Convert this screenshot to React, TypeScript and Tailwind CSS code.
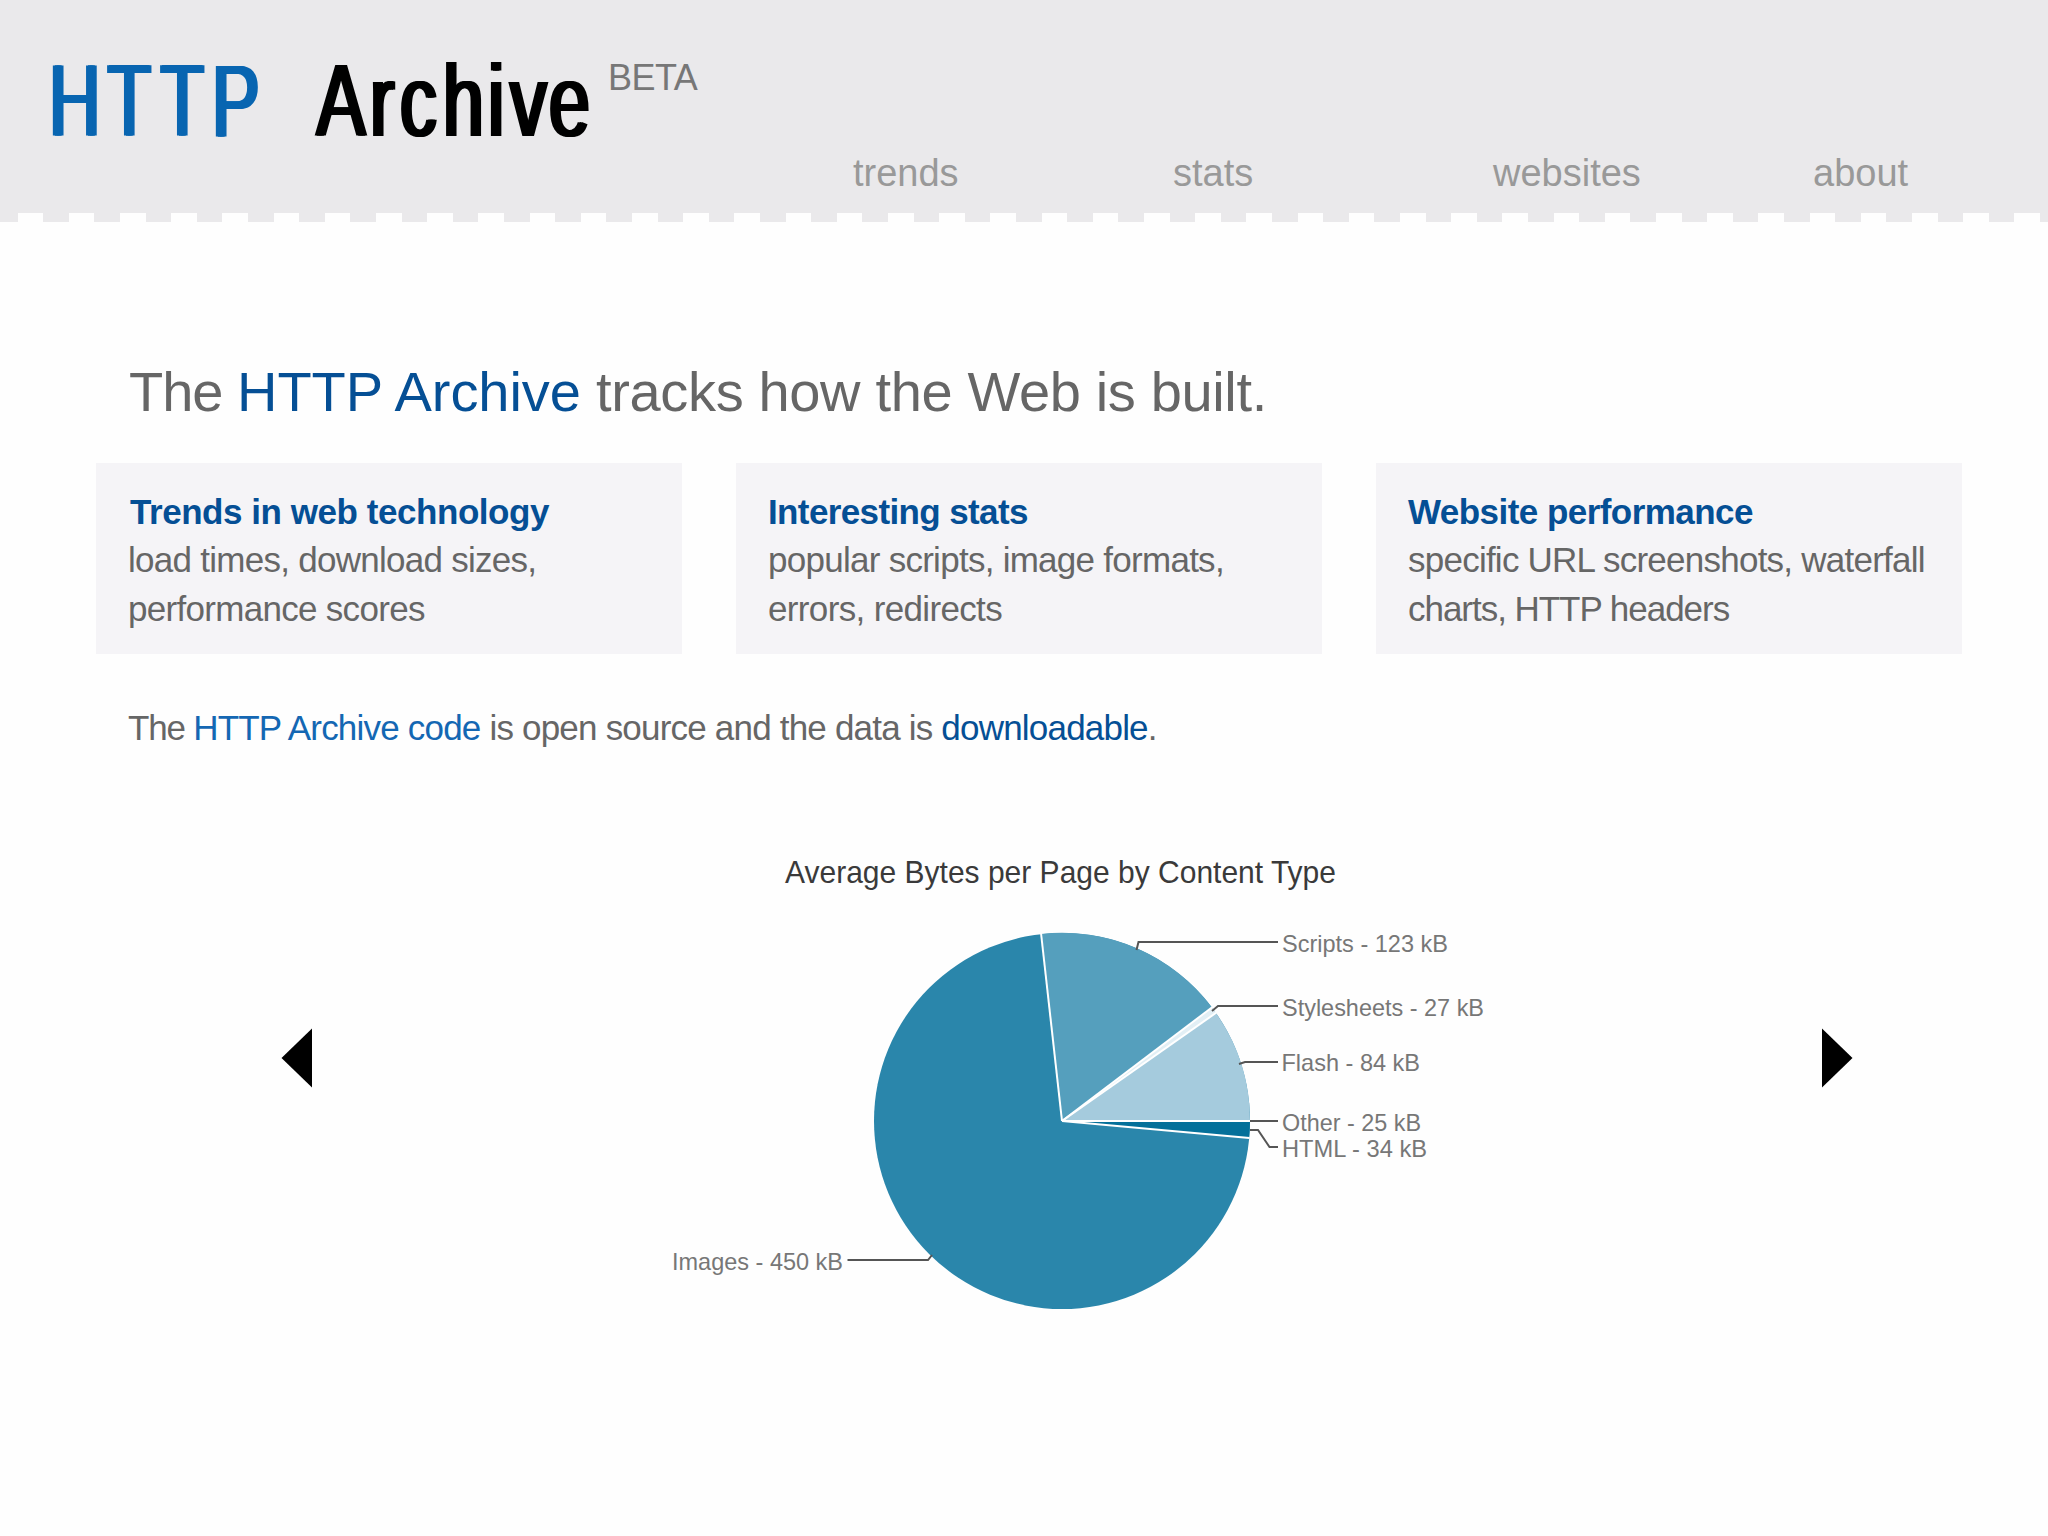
const navLinks = ["trends", "stats", "websites", "about"];

const cards = [
  {
    title: "Trends in web technology",
    titleClass: "pl-[2px] tracking-[-0.45px]",
    lines: [
      { text: "load times, download sizes,", className: "tracking-[-0.73px]" },
      { text: "performance scores", className: "tracking-[-0.7px]" },
    ],
  },
  {
    title: "Interesting stats",
    titleClass: "tracking-[-0.62px]",
    lines: [
      { text: "popular scripts, image formats,", className: "tracking-[-0.73px]" },
      { text: "errors, redirects", className: "tracking-[-0.65px]" },
    ],
  },
  {
    title: "Website performance",
    titleClass: "tracking-[-0.55px]",
    lines: [
      { text: "specific URL screenshots, waterfall", className: "tracking-[-0.76px]" },
      { text: "charts, HTTP headers", className: "tracking-[-1.03px]" },
    ],
  },
];

const labels = [
  { text: "Scripts - 123 kB", x: 642, y: 111.5, width: 166, line: "496.5,110 498.5,102 638,102" },
  { text: "Stylesheets - 27 kB", x: 642, y: 175.5, width: 202, line: "572,171 578,166 638,166" },
  { text: "Flash - 84 kB", x: 641.5, y: 231, width: 138.5, line: "599,224 605,222 638,222" },
  { text: "Other - 25 kB", x: 642, y: 291, width: 139, line: "610,281 638,281" },
  { text: "HTML - 34 kB", x: 642, y: 316.5, width: 145, line: "610,290 618,290 629.5,307 638,307" },
  { text: "Images - 450 kB", x: 32, y: 429.5, width: 171, line: "207.5,420 288,420 292,415" },
];

const Logo = () => {
  return (
    <svg className="block" width="560" height="130" viewBox="0 0 560 130" fontFamily="Liberation Sans, Arial, sans-serif" fontSize="102">
      {/* the shadows thicken the vertical strokes only */}
      <g className="[filter:drop-shadow(2px_0_0_#0865b1)_drop-shadow(2px_0_0_#0865b1)]">
        <text transform="scale(0.7 1)" x="-1.6 82 157.7 231.6" y="106" fill="#0865b1">
          HTTP
        </text>
      </g>
      <g className="[filter:drop-shadow(2px_0_0_#000)_drop-shadow(2px_0_0_#000)]">
        <text transform="scale(0.72 1)" x="370 444.4 486 545.8 608.3 638.9 693" y="106" fill="#000">
          Archive
        </text>
      </g>
    </svg>
  );
};

const Header = () => {
  return (
    <header>
      <div className="h-[213px] bg-[#eae9eb]">
        <div className="flex h-[150px] items-start pt-[30px] pl-12">
          <Logo />
          <span className="mt-[22px] text-[36px] leading-[52px] tracking-[-0.5px] text-[#777]">BETA</span>
        </div>
        <nav className="ml-[853px] grid grid-cols-[320px_320px_320px_auto] pt-px text-[38px] leading-[44px] text-[#999]">
          {navLinks.map((link) => (
            <a key={link}>{link}</a>
          ))}
        </nav>
      </div>
      {/* stitched edge */}
      <div className="h-[9px] bg-[repeating-linear-gradient(90deg,#eae9eb_0_25.6px,#fefefe_25.6px_51.2px)] bg-[position:-8px_0] bg-[length:2099.2px_9px]"></div>
    </header>
  );
};

const PieChart = () => {
  return (
    <svg className="block" width="880" height="500" viewBox="0 0 880 500" fontFamily="Liberation Sans, Arial, sans-serif">
      <text x="145" y="43" fontSize="30.5" fill="#3a3a3a" textLength="551" lengthAdjust="spacingAndGlyphs">
        Average Bytes per Page by Content Type
      </text>
      <circle cx="422" cy="281" r="188" fill="#2a86ab" />
      <path d="M422 281 L401 94 A188 188 0 0 1 572 167.500Z" fill="#559fbd" />
      <path d="M422 281 L572 167.500 A188 188 0 0 1 576 173Z" fill="#e2eff5" />
      <path d="M422 281 L576 173 A188 188 0 0 1 610 281Z" fill="#a5cbdd" />
      <path d="M422 281 L610 281 A188 188 0 0 1 609 298Z" fill="#04709a" />
      <g stroke="#fff" strokeWidth="2">
        <path d="M422 281 L401 93" />
        <path d="M422 281 L572.500 167" />
        <path d="M422 281 L576.500 172.500" />
        <path d="M422 281 H610" />
        <path d="M422 281 L609.500 298" />
      </g>
      {labels.map((label) => (
        <g key={label.text}>
          <polyline points={label.line} fill="none" stroke="#555" strokeWidth="2" />
          <text x={label.x} y={label.y} fontSize="24" fill="#777" textLength={label.width} lengthAdjust="spacingAndGlyphs">
            {label.text}
          </text>
        </g>
      ))}
    </svg>
  );
};

const App = () => {
  return (
    <div className="h-[1536px] w-[2048px] overflow-hidden bg-[#fefefe] font-['Liberation_Sans',Arial,sans-serif] text-[#666]">
      <Header />
      <main className="pt-[138px]">
        <h1 className="pl-[129px] text-[56px] leading-[64px] tracking-[-0.35px]">
          <span className="tracking-[-1px]">The </span>
          <a className="tracking-[-0.05px] text-[#054f95]">HTTP Archive</a> tracks how the Web is built.
        </h1>
        <div className="mt-[39px] ml-24 flex gap-[54px]">
          {cards.map((card) => (
            <div key={card.title} className="h-[191px] w-[586px] bg-[#f5f4f7] pt-[25px] pl-8 text-[35px] whitespace-nowrap">
              <h2 className={`leading-[47px] font-bold text-[#054f95] ${card.titleClass}`}>{card.title}</h2>
              {card.lines.map((line) => (
                <p key={line.text} className={`leading-[49px] ${line.className}`}>
                  {line.text}
                </p>
              ))}
            </div>
          ))}
        </div>
        <p className="mt-[49px] pl-32 text-[35px] leading-[49px] tracking-[-0.8px]">
          <span className="tracking-[-1.2px]">The </span>
          <a className="text-[#1467b3]">HTTP Archive code</a> is open source and the data is{" "}
          <a className="text-[#054f95]">downloadable</a>.
        </p>
        <div className="mt-[88px] flex">
          <svg className="mt-[188px] ml-[281px]" width="31" height="60" viewBox="0 0 31 60">
            <path d="M0.500 30 L31 0.500 V59.500Z" />
          </svg>
          <div className="ml-[328px]">
            <PieChart />
          </div>
          <svg className="mt-[188px] ml-[302px]" width="31" height="60" viewBox="0 0 31 60">
            <path d="M30.500 30 L0 0.500 V59.500Z" />
          </svg>
        </div>
      </main>
    </div>
  );
};

export default App;
